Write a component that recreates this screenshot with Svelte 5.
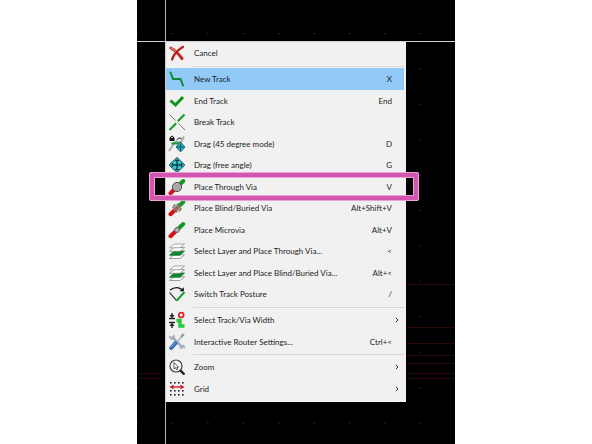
<script lang="ts">
  interface Item {
    icon: string;
    label: string;
    keys?: string;
    submenu?: boolean;
    marked?: boolean;
  }

  const groups: Item[][] = [
    [{ icon: 'cancel', label: 'Cancel' }],
    [
      { icon: 'track', label: 'New Track', keys: 'X' },
      { icon: 'check', label: 'End Track', keys: 'End' },
      { icon: 'break', label: 'Break Track' },
      { icon: 'drag45', label: 'Drag (45 degree mode)', keys: 'D' },
      { icon: 'drag', label: 'Drag (free angle)', keys: 'G' },
      { icon: 'via', label: 'Place Through Via', keys: 'V', marked: true },
      { icon: 'blind', label: 'Place Blind/Buried Via', keys: 'Alt+Shift+V' },
      { icon: 'micro', label: 'Place Microvia', keys: 'Alt+V' },
      { icon: 'layers', label: 'Select Layer and Place Through Via...', keys: '<' },
      { icon: 'layers', label: 'Select Layer and Place Blind/Buried Via...', keys: 'Alt+<' },
      { icon: 'posture', label: 'Switch Track Posture', keys: '/' }
    ],
    [
      { icon: 'width', label: 'Select Track/Via Width', submenu: true },
      { icon: 'tools', label: 'Interactive Router Settings...', keys: 'Ctrl+<' }
    ],
    [
      { icon: 'zoom', label: 'Zoom', submenu: true },
      { icon: 'grid', label: 'Grid', submenu: true }
    ]
  ];

  const traces = [284, 327, 343, 355, 363, 373, 378];
  const dots = [0, 4, 8, 12];

  let active = $state('New Track');
</script>

<main>
  <div class="board">
    <svg class="backdrop" aria-hidden="true">
      <defs>
        <pattern id="dots" x="35" y="33" width="35.4" height="35.4" patternUnits="userSpaceOnUse">
          <rect width="1" height="1" fill="#4a4a4a" />
        </pattern>
      </defs>
      <rect width="100%" height="100%" fill="url(#dots)" />
      {#each traces as y}
        <line x1="85%" x2="100%" y1={y + 0.5} y2={y + 0.5} stroke="#2e0606" />
      {/each}
      <line x1="1" x2="25" y1="373.5" y2="373.5" stroke="#2e0606" />
      <line x1="1" x2="25" y1="378.5" y2="378.5" stroke="#2e0606" />
      <line x1="28.5" x2="28.5" y1="0" y2="100%" stroke="#b8b8b8" />
      <line x1="0" x2="100%" y1="41.5" y2="41.5" stroke="#d0d0d0" />
    </svg>

    <div class="menu" role="menu">
      {#each groups as group}
        <div class="group" role="group">
          {#each group as item}
            <button
              class="item"
              class:active={active === item.label}
              class:marked={item.marked}
              role="menuitem"
              onclick={() => (active = item.label)}
            >
              <svg class="icon" viewBox="0 0 18 18" aria-hidden="true">
                {#if item.icon === 'cancel'}
                  <path d="M2.8 4 C7 6 11 10.5 14 14.5" stroke="#c22a22" stroke-width="3" fill="none" stroke-linecap="round" />
                  <path d="M15 3 C11 5 6 10 4 15.5" stroke="#b01e18" stroke-width="2.2" fill="none" stroke-linecap="round" />
                  <path d="M3 4 L7.5 7" stroke="#e2786e" stroke-width="1.4" stroke-linecap="round" />
                {:else if item.icon === 'track'}
                  <path d="M2.5 2.5 L5 9 H12.5 L15 15.5" stroke="#0b8a35" stroke-width="2" fill="none" stroke-linecap="round" />
                {:else if item.icon === 'check'}
                  <path d="M2.5 8.5 L7.5 13 L15 5" stroke="#0c9418" stroke-width="3" fill="none" />
                {:else if item.icon === 'break'}
                  <path d="M1.5 17 L8.2 10.2 M9.8 8.2 L16.5 1.5" stroke="#149a28" stroke-width="2" />
                  <path d="M1.5 1.5 L7.5 7.5 M10.5 10.5 L17 17" stroke="#777" stroke-width="1" />
                {:else if item.icon === 'drag45'}
                  <path d="M1 16 L7 7 H13 L16 1.5" stroke="#aaa" stroke-width="2" fill="none" />
                  <path d="M3.5 8.5 H11" stroke="#149a28" stroke-width="2" fill="none" />
                  <path d="M8.5 5 Q11 1.5 13.5 3.5" stroke="#222" stroke-width="1" fill="none" />
                  <path d="M2.5 3.5 V2 Q4 0 5.5 2 V3.5" stroke="#111" fill="none" />
                  <rect x="1.5" y="2.8" width="5" height="3.2" fill="#111" />
                  <path d="M12.5 7 L17 12 L12.5 17 L8 12 Z" fill="#28b5c2" stroke="#145660" stroke-width=".8" />
                  <path d="M12.5 8.5 V15.5 M9 12 H16" stroke="#145660" stroke-width="1" />
                {:else if item.icon === 'drag'}
                  <path d="M9 1.5 L16.8 9 L9 16.5 L1.2 9 Z" fill="#2fc8d0" stroke="#123f48" stroke-width="1" />
                  <path d="M9 3.5 V14.5 M3.5 9 H14.5" stroke="#123f48" stroke-width="1.4" />
                  <path d="M7 4.5 H11 M7 13.5 H11 M4.5 7 V11 M13.5 7 V11" stroke="#123f48" stroke-width="1" />
                {:else if item.icon === 'via' || item.icon === 'blind' || item.icon === 'micro'}
                  <path d="M9 9 L15.2 3" stroke="#109a20" stroke-width="4" stroke-linecap="round" />
                  <path d="M2.5 15.2 L9 9" stroke="#d80f18" stroke-width="4" stroke-linecap="round" />
                  {#if item.icon === 'via'}
                    <circle cx="9" cy="9" r="4.6" fill="#a8a8a8" stroke="#555" />
                  {:else if item.icon === 'blind'}
                    <circle cx="9" cy="9" r="4.2" fill="#8d9a80" fill-opacity=".6" stroke="#555" stroke-dasharray="4 2.6" />
                  {:else}
                    <circle cx="9" cy="9" r="2.4" fill="#b5b5b5" stroke="#666" />
                  {/if}
                {:else if item.icon === 'layers'}
                  <path d="M1.5 16.5 L6 12.8 H16.5 L12 16.5 Z" fill="#fff" stroke="#888" stroke-width=".8" />
                  <path d="M1.5 13.2 L6 9 H16.5 L12 13.2 Z" fill="#0d8a2b" stroke="#19733a" stroke-width=".8" />
                  <path d="M1.5 9.3 L6 5.5 H16.5 L12 9.3 Z" fill="#fff" stroke="#888" stroke-width=".8" />
                  <path d="M1.5 5.8 L6 2 H16.5 L12 5.8 Z" fill="#f8f8f8" stroke="#999" stroke-width=".8" />
                {:else if item.icon === 'posture'}
                  <path d="M1.5 7.5 L8.5 15.5" stroke="#444" stroke-width="1.2" />
                  <path d="M8.5 15.8 L16.5 7" stroke="#149a28" stroke-width="2" />
                  <path d="M2 5 Q8.5 .5 14 4.5" stroke="#111" stroke-width="1.3" fill="none" />
                  <path d="M15.8 2.2 V6.3 H11.5 Z" fill="#111" />
                {:else if item.icon === 'width'}
                  <path d="M1 7.5 H7 M1 11.5 H7 M4 2 V6 M4 13 V17" stroke="#222" stroke-width="1.4" />
                  <path d="M1.5 4 H6.5 L4 7.2 Z M1.5 15 H6.5 L4 11.8 Z" fill="#222" />
                  <path d="M8.5 9.5 H12 V15 H16.5" stroke="#28c83c" stroke-width="3.4" fill="none" />
                  <circle cx="13.2" cy="4" r="2.4" fill="#fff" stroke="#df2430" stroke-width="1.8" />
                {:else if item.icon === 'tools'}
                  <path d="M4.5 4.5 L14 14" stroke="#a4b0ba" stroke-width="2.8" stroke-linecap="round" />
                  <path d="M1.5 3 L3 6 L6 5.2 L5.5 2" fill="none" stroke="#a5b2bc" stroke-width="1.8" />
                  <path d="M16.5 15.5 L15.5 12.5 L12.5 13.5 L13 16" fill="none" stroke="#a5b2bc" stroke-width="1.6" />
                  <path d="M8 10 L14.5 3" stroke="#b4bcc3" stroke-width="1.8" />
                  <path d="M13 4 L15.8 1.2" stroke="#8d9cab" stroke-width="2.4" />
                  <path d="M3.2 15 L7.5 10.2" stroke="#3a70b8" stroke-width="4" stroke-linecap="round" />
                  <path d="M3 14 L7 9.8" stroke="#8db0e0" stroke-width="1" />
                {:else if item.icon === 'zoom'}
                  <circle cx="8" cy="8" r="6" fill="#f7f7f7" stroke="#444" stroke-width="1.2" />
                  <path d="M12.8 12.8 L15.8 15.8" stroke="#222" stroke-width="2.4" stroke-linecap="round" />
                  <path d="M6 4.5 V10.8 L7.5 9.6 L8.5 11.8 L9.6 11.2 L8.8 9.2 H10.6 Z" fill="#fff" stroke="#333" stroke-width=".8" />
                {:else if item.icon === 'grid'}
                  {#each dots as x}
                    {#each [2, 10, 14] as y}
                      <rect x={x + 2} y={y} width="1.6" height="1.6" fill="#222" />
                    {/each}
                  {/each}
                  <path d="M4 7 H14" stroke="#c8202c" stroke-width="1.4" />
                  <path d="M1.5 7 L5.5 4.5 V9.5 Z M16.5 7 L12.5 4.5 V9.5 Z" fill="#c8202c" />
                {/if}
              </svg>
              <span class="label">{item.label}</span>
              {#if item.keys}
                <span class="keys">{item.keys}</span>
              {/if}
              {#if item.submenu}
                <svg class="arrow" viewBox="0 0 4 6" aria-hidden="true">
                  <path d="M.8 .8 L3 3 L.8 5.2" fill="none" stroke="#333" />
                </svg>
              {/if}
            </button>
          {/each}
        </div>
      {/each}
    </div>
  </div>
</main>

<style>
  :global(body) {
    margin: 0;
    background: #fff;
  }
  main {
    padding: 0 137px;
  }
  .board {
    position: relative;
    box-sizing: border-box;
    min-height: 100vh;
    padding: 41px 49px 41px 28px;
    background: #000;
  }
  .backdrop {
    position: absolute;
    inset: 0;
    width: 100%;
    height: 100%;
  }
  .menu {
    position: relative;
    padding: 0 2px 3px 0;
    border: 1px solid #d0d0d0;
    border-width: 1px 0 0 1px;
    background: #f1f1f1;
    font-family: Lato, 'Open Sans', sans-serif;
    font-size: 8px;
  }
  .group + .group {
    position: relative;
    padding-top: 4px;
  }
  .group + .group::before {
    content: '';
    position: absolute;
    top: 2px;
    left: 27px;
    right: 0;
    height: 1px;
    background: #d5d5d5;
  }
  .item {
    position: relative;
    display: flex;
    align-items: center;
    width: 100%;
    height: 22px;
    padding: 0 12px 0 2px;
    border: 0;
    background: none;
    color: #1c1c1c;
    font: inherit;
    text-align: left;
    white-space: nowrap;
  }
  .item:nth-child(even) {
    height: 21px;
  }
  .active {
    background: #91c9f7;
  }
  .icon {
    width: 18px;
    height: 18px;
    margin-right: 8px;
    flex: none;
  }
  .label {
    flex: 1;
  }
  .arrow {
    width: 4px;
    height: 6px;
    margin-right: -7px;
  }
  .marked::after {
    content: '';
    position: absolute;
    inset: -4px -15px -4px -17px;
    border: 5px solid #d455b0;
    outline: 1px solid #e9a3d5;
    outline-offset: -1px;
    border-radius: 2px;
    box-shadow: inset 0 0 0 1px #e9a3d5;
    z-index: 1;
  }
</style>
